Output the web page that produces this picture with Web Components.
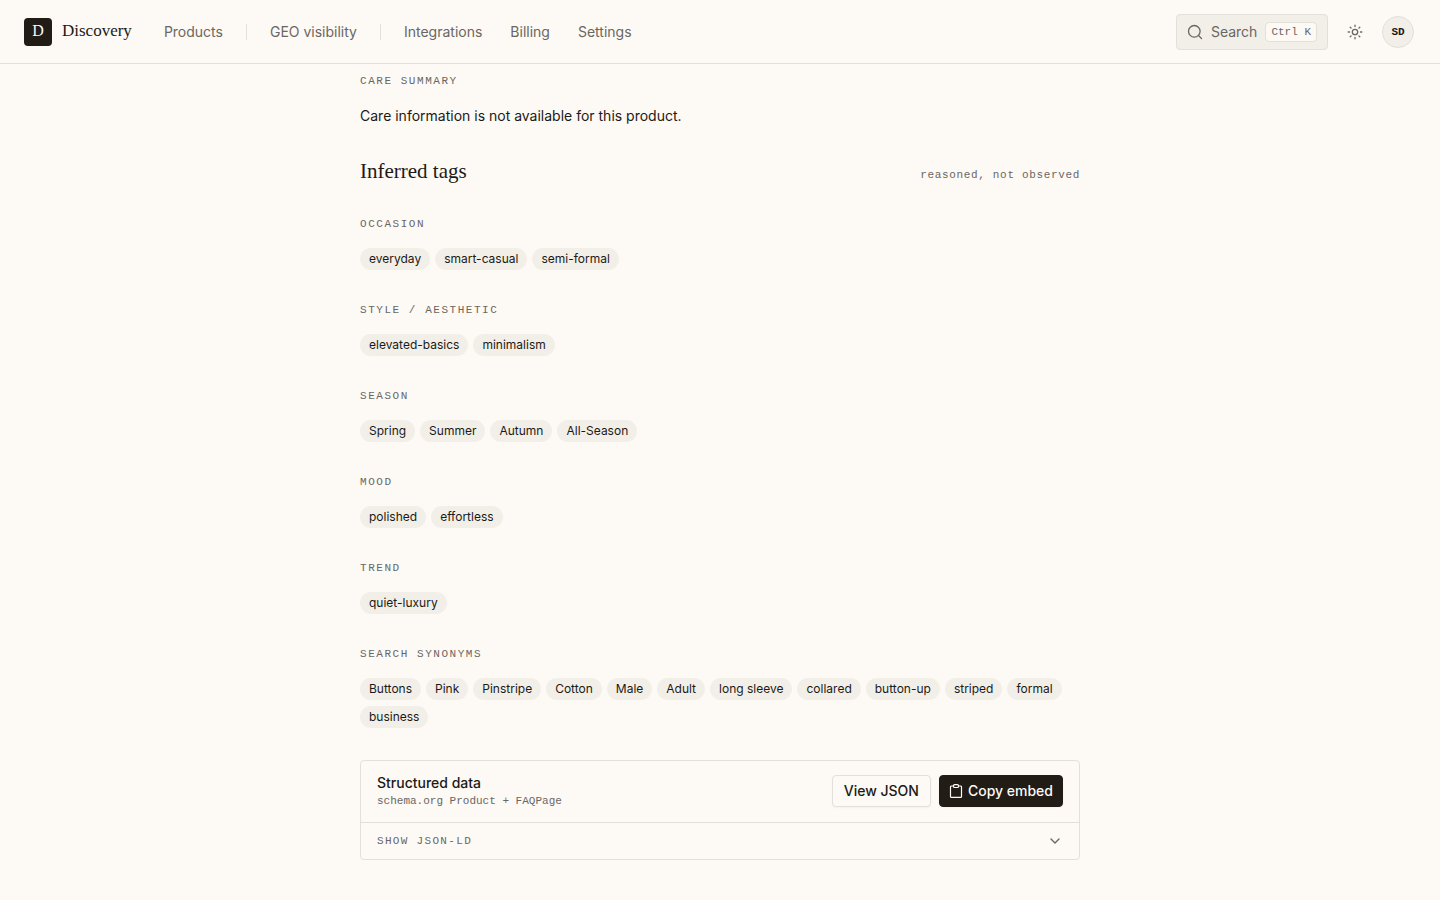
<!DOCTYPE html>
<html lang="en">
<head>
<meta charset="utf-8">
<meta name="viewport" content="width=device-width, initial-scale=1">
<title>Discovery</title>
<style>
    :root {
        --bg: #fdf9f5;
        --surface: #f2efe9;
        --line: #e3e0dc;
        --text: #1c1a17;
        --muted: #6a6762;
        --ink: #211c16;
        --sans: Inter, "Liberation Sans", sans-serif;
        --serif: "Liberation Serif", serif;
        --mono: "Liberation Mono", monospace;
    }
    body {
        margin: 0;
        background: var(--bg);
        color: var(--text);
        font: 14px/22px var(--sans);
    }
    main {
        max-width: 720px;
        margin: 0 auto;
        padding: 9px 24px 40px;
        display: flex;
        flex-direction: column;
        gap: 32px;
    }
    p {
        margin: 0;
    }
</style>
</head>
<body>
<site-header>
    <nav-link href="#products">Products</nav-link>
    <nav-divider></nav-divider>
    <nav-link href="#geo">GEO visibility</nav-link>
    <nav-divider></nav-divider>
    <nav-link href="#integrations">Integrations</nav-link>
    <nav-link href="#billing">Billing</nav-link>
    <nav-link href="#settings">Settings</nav-link>
    <search-button slot="tools">Search</search-button>
    <theme-toggle slot="tools"></theme-toggle>
    <user-avatar slot="tools">SD</user-avatar>
</site-header>
<main>
    <field-group label="Care summary"><p>Care information is not available for this product.</p></field-group>
    <section-heading note="reasoned, not observed">Inferred tags</section-heading>
    <field-group label="Occasion"><tag-list tags="everyday,smart-casual,semi-formal"></tag-list></field-group>
    <field-group label="Style / aesthetic"><tag-list tags="elevated-basics,minimalism"></tag-list></field-group>
    <field-group label="Season"><tag-list tags="Spring,Summer,Autumn,All-Season"></tag-list></field-group>
    <field-group label="Mood"><tag-list tags="polished,effortless"></tag-list></field-group>
    <field-group label="Trend"><tag-list tags="quiet-luxury"></tag-list></field-group>
    <field-group label="Search synonyms"><tag-list tags="Buttons,Pink,Pinstripe,Cotton,Male,Adult,long sleeve,collared,button-up,striped,formal,business"></tag-list></field-group>
    <structured-data>
        Structured data
        <span slot="note">schema.org Product + FAQPage</span>
        <action-button slot="actions">View JSON</action-button>
        <action-button slot="actions" primary>Copy embed</action-button>
        <span slot="toggle">Show JSON-LD</span>
    </structured-data>
</main>

<script>
class SiteHeader extends HTMLElement {
    connectedCallback() {
        this.attachShadow({ mode: 'open' });
        this.shadowRoot.innerHTML = `
            <style>
                :host {
                    display: block;
                    position: sticky;
                    top: 0;
                    z-index: 10;
                    background: var(--bg);
                    border-bottom: 1px solid var(--line);
                }
                header {
                    display: flex;
                    align-items: center;
                    height: 63px;
                    padding: 0 26px 0 24px;
                }
                .brand {
                    display: flex;
                    gap: 10px;
                    margin-right: 32px;
                    color: var(--text);
                    text-decoration: none;
                    font: 17px/25px var(--serif);
                }
                .mark {
                    width: 28px;
                    height: 28px;
                    border-radius: 4px;
                    background: var(--ink);
                    color: var(--bg);
                    font-size: 16px;
                    text-align: center;
                }
                nav {
                    display: flex;
                    align-items: center;
                    gap: 23px;
                }
                .tools {
                    display: flex;
                    align-items: center;
                    gap: 10px;
                    margin-left: auto;
                }
            </style>
            <header>
                <a class="brand" href="#home"><span class="mark">D</span><span>Discovery</span></a>
                <nav aria-label="Main"><slot></slot></nav>
                <div class="tools"><slot name="tools"></slot></div>
            </header>
        `;
    }
}

class NavLink extends HTMLElement {
    connectedCallback() {
        this.attachShadow({ mode: 'open' });
        this.shadowRoot.innerHTML = `
            <style>
                :host {
                    display: block;
                }
                :host(.follows) {
                    margin-left: 5px;
                }
                a {
                    color: var(--muted);
                    text-decoration: none;
                }
                a:hover {
                    color: var(--text);
                }
            </style>
            <a href="${this.getAttribute('href')}"><slot></slot></a>
        `;

        // Links next to each other sit a little further apart
        const prev = this.previousElementSibling;
        this.classList.toggle('follows', !!prev && prev.localName === 'nav-link');
    }
}

class NavDivider extends HTMLElement {
    connectedCallback() {
        this.attachShadow({ mode: 'open' });
        this.shadowRoot.innerHTML = `
            <style>
                :host {
                    display: block;
                    width: 1px;
                    height: 16px;
                    background: var(--line);
                }
            </style>
        `;
    }
}

class SearchButton extends HTMLElement {
    connectedCallback() {
        this.attachShadow({ mode: 'open' });
        this.shadowRoot.innerHTML = `
            <style>
                :host {
                    display: block;
                }
                button {
                    display: flex;
                    align-items: center;
                    gap: 8px;
                    height: 36px;
                    padding: 0 10px;
                    border: 1px solid var(--line);
                    border-radius: 4px;
                    background: var(--surface);
                    color: var(--muted);
                    font: inherit;
                    cursor: pointer;
                }
                kbd {
                    padding: 0 5px;
                    border: 1px solid var(--line);
                    border-radius: 4px;
                    background: var(--bg);
                    font: 11px/18px var(--mono);
                }
            </style>
            <button type="button">
                <svg width="16" height="16" viewBox="0 0 16 16" fill="none" stroke="currentColor" stroke-width="1.3" stroke-linecap="round" aria-hidden="true">
                    <circle cx="7.3" cy="7.3" r="5.8"/>
                    <path d="M11.5 11.5l3 3"/>
                </svg>
                <slot></slot>
                <kbd>Ctrl K</kbd>
            </button>
        `;
    }
}

class ThemeToggle extends HTMLElement {
    connectedCallback() {
        this.attachShadow({ mode: 'open' });
        this.shadowRoot.innerHTML = `
            <style>
                :host {
                    display: block;
                }
                button {
                    display: grid;
                    place-items: center;
                    width: 34px;
                    height: 34px;
                    padding: 0;
                    border: 0;
                    background: none;
                    color: var(--muted);
                    cursor: pointer;
                }
            </style>
            <button type="button" aria-label="Toggle theme">
                <svg width="16" height="16" viewBox="0 0 16 16" fill="none" stroke="currentColor" stroke-width="1.3" stroke-linecap="round" aria-hidden="true">
                    <circle cx="8" cy="8" r="2.7"/>
                    <path d="M8 1.200v1.300M8 13.500v1.300M1.200 8h1.300M13.500 8h1.300M3.200 3.200l.9.9M11.900 11.900l.9.9M3.200 12.800l.9-.9M11.900 4.100l.9-.9"/>
                </svg>
            </button>
        `;
    }
}

class UserAvatar extends HTMLElement {
    connectedCallback() {
        this.attachShadow({ mode: 'open' });
        this.shadowRoot.innerHTML = `
            <style>
                :host {
                    display: block;
                }
                button {
                    width: 32px;
                    height: 32px;
                    padding: 0;
                    border: 1px solid var(--line);
                    border-radius: 50%;
                    background: var(--surface);
                    color: var(--text);
                    font: bold 11px/28px var(--mono);
                    cursor: pointer;
                }
            </style>
            <button type="button"><slot></slot></button>
        `;
    }
}

class FieldGroup extends HTMLElement {
    connectedCallback() {
        this.attachShadow({ mode: 'open' });
        this.shadowRoot.innerHTML = `
            <style>
                :host {
                    display: flex;
                    flex-direction: column;
                    gap: 16px;
                }
                h3 {
                    margin: 0;
                    color: var(--muted);
                    font: 11px/16px var(--mono);
                    letter-spacing: 0.14em;
                    text-transform: uppercase;
                }
            </style>
            <h3>${this.getAttribute('label')}</h3>
            <slot></slot>
        `;
    }
}

class SectionHeading extends HTMLElement {
    connectedCallback() {
        this.attachShadow({ mode: 'open' });
        this.shadowRoot.innerHTML = `
            <style>
                :host {
                    display: flex;
                    align-items: baseline;
                    justify-content: space-between;
                }
                h2 {
                    margin: 0;
                    font: 21px/25px var(--serif);
                }
                span {
                    color: var(--muted);
                    font: 11px/16px var(--mono);
                    letter-spacing: 0.06em;
                }
            </style>
            <h2><slot></slot></h2>
            <span>${this.getAttribute('note')}</span>
        `;
    }
}

class TagList extends HTMLElement {
    connectedCallback() {
        const tags = this.getAttribute('tags').split(',');
        this.attachShadow({ mode: 'open' });
        this.shadowRoot.innerHTML = `
            <style>
                :host {
                    display: block;
                }
                ul {
                    display: flex;
                    flex-wrap: wrap;
                    gap: 6px 5px;
                    margin: 0;
                    padding: 0;
                    list-style: none;
                }
                li {
                    padding: 0 9px;
                    border-radius: 11px;
                    background: var(--surface);
                    font-size: 12px;
                    line-height: 22px;
                }
            </style>
            <ul>${tags.map(tag => `<li>${tag}</li>`).join('')}</ul>
        `;
    }
}

class ActionButton extends HTMLElement {
    connectedCallback() {
        const icon = this.hasAttribute('primary') ? `
            <svg width="14" height="14" viewBox="0 0 14 14" fill="none" stroke="currentColor" stroke-width="1.2" stroke-linejoin="round" aria-hidden="true">
                <path d="M4.500 2H2.500a1 1 0 0 0-1 1v9.400a1 1 0 0 0 1 1h9a1 1 0 0 0 1-1V3a1 1 0 0 0-1-1h-2"/>
                <rect x="4.500" y=".7" width="5" height="2.800" rx="1"/>
            </svg>` : '';
        this.attachShadow({ mode: 'open' });
        this.shadowRoot.innerHTML = `
            <style>
                :host {
                    display: block;
                }
                button {
                    display: flex;
                    align-items: center;
                    gap: 5px;
                    height: 32px;
                    padding: 0 11px;
                    border: 1px solid var(--line);
                    border-radius: 4px;
                    background: var(--bg);
                    box-shadow: 0 1px 2px rgba(0,0,0,0.04);
                    color: var(--text);
                    font: 500 14px/20px var(--sans);
                    cursor: pointer;
                }
                :host([primary]) button {
                    padding: 0 9px;
                    border-color: var(--ink);
                    background: var(--ink);
                    color: var(--bg);
                }
            </style>
            <button type="button">${icon}<slot></slot></button>
        `;
    }
}

class StructuredData extends HTMLElement {
    connectedCallback() {
        this.attachShadow({ mode: 'open' });
        this.shadowRoot.innerHTML = `
            <style>
                :host {
                    display: block;
                    border: 1px solid var(--line);
                    border-radius: 4px;
                }
                .top {
                    display: flex;
                    justify-content: space-between;
                    padding: 12px 16px;
                }
                h3 {
                    margin: 0;
                    font: 500 14px/20px var(--sans);
                }
                .note {
                    color: var(--muted);
                    font: 11px/17px var(--mono);
                }
                .actions {
                    display: flex;
                    gap: 8px;
                    padding-top: 2px;
                }
                details {
                    border-top: 1px solid var(--line);
                }
                summary {
                    display: flex;
                    align-items: center;
                    justify-content: space-between;
                    padding: 10px 16px;
                    color: var(--muted);
                    font: 11px/16px var(--mono);
                    letter-spacing: 0.12em;
                    text-transform: uppercase;
                    cursor: pointer;
                }
            </style>
            <div class="top">
                <div>
                    <h3><slot></slot></h3>
                    <div class="note"><slot name="note"></slot></div>
                </div>
                <div class="actions"><slot name="actions"></slot></div>
            </div>
            <details>
                <summary>
                    <slot name="toggle"></slot>
                    <svg width="16" height="16" viewBox="0 0 16 16" fill="none" stroke="currentColor" stroke-width="1.4" stroke-linecap="round" stroke-linejoin="round" aria-hidden="true">
                        <path d="M4 6l4 4 4-4"/>
                    </svg>
                </summary>
            </details>
        `;
    }
}

customElements.define('site-header', SiteHeader);
customElements.define('nav-link', NavLink);
customElements.define('nav-divider', NavDivider);
customElements.define('search-button', SearchButton);
customElements.define('theme-toggle', ThemeToggle);
customElements.define('user-avatar', UserAvatar);
customElements.define('field-group', FieldGroup);
customElements.define('section-heading', SectionHeading);
customElements.define('tag-list', TagList);
customElements.define('action-button', ActionButton);
customElements.define('structured-data', StructuredData);
</script>
</body>
</html>
